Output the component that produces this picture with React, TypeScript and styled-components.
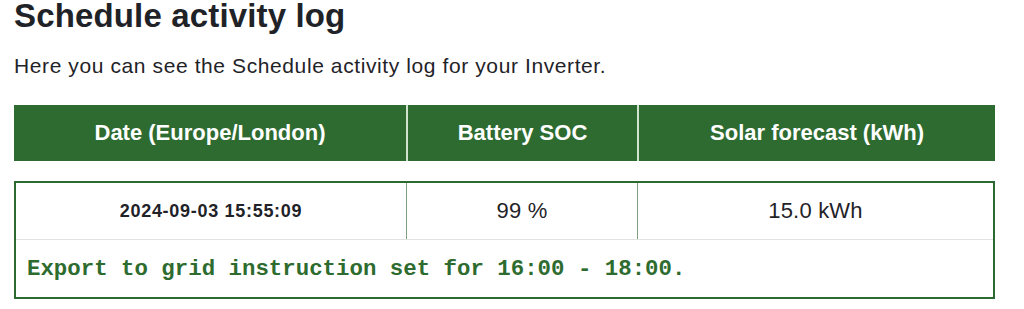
import React from "react";
import styled, { createGlobalStyle } from "styled-components";

const GlobalStyle = createGlobalStyle`
  html, body { margin: 0; padding: 0; background: #ffffff; }
  body { font-family: "Liberation Sans", Arial, sans-serif; color: #212529; }
  *, *::before, *::after { box-sizing: border-box; }
`;

const Page = styled.main`
  padding: 0 29px 0 14px;
`;

const Title = styled.h1`
  margin: 0;
  font-size: 33px;
  line-height: 32px;
  font-weight: 700;
  letter-spacing: 0.15px;
  color: #1f2328;
`;

const Lead = styled.p`
  margin: 21px 0 0;
  font-size: 21px;
  line-height: 26px;
  letter-spacing: 0.6px;
  color: #1f2328;
`;

const HeaderRow = styled.div`
  margin-top: 26px;
  display: grid;
  grid-template-columns: 392px 231px 1fr;
  height: 56px;
  background: #2e6b31;
`;

const HeaderCell = styled.div<{ $divider?: boolean }>`
  display: flex;
  align-items: center;
  justify-content: center;
  color: #ffffff;
  font-weight: 700;
  font-size: 22px;
  border-left: ${(p) => (p.$divider ? "2px solid #cfe3cf" : "none")};
`;

const Entry = styled.section`
  margin-top: 20px;
  border: 2px solid #2c6a2f;
`;

const ValueRow = styled.div`
  display: grid;
  grid-template-columns: 390px 231px 1fr;
  height: 57px;
  border-bottom: 1px solid #e2e2e2;
`;

const ValueCell = styled.div<{ $bold?: boolean; $divider?: boolean }>`
  display: flex;
  align-items: center;
  justify-content: center;
  font-size: ${(p) => (p.$bold ? "18px" : "22px")};
  font-weight: ${(p) => (p.$bold ? 700 : 400)};
  letter-spacing: ${(p) => (p.$bold ? "0.7px" : "0.2px")};
  color: #1f2328;
  border-left: ${(p) => (p.$divider ? "1px solid #7d9f7d" : "none")};
`;

const Message = styled.div`
  height: 57px;
  display: flex;
  align-items: center;
  padding-left: 11px;
  font-family: "Liberation Mono", "Courier New", monospace;
  font-weight: 700;
  font-size: 22.4px;
  color: #2e6b2f;
`;

export default function App() {
  return (
    <>
      <GlobalStyle />
      <Page>
        <Title>Schedule activity log</Title>
        <Lead>Here you can see the Schedule activity log for your Inverter.</Lead>
        <HeaderRow>
          <HeaderCell>Date (Europe/London)</HeaderCell>
          <HeaderCell $divider>Battery SOC</HeaderCell>
          <HeaderCell $divider>Solar forecast (kWh)</HeaderCell>
        </HeaderRow>
        <Entry>
          <ValueRow>
            <ValueCell $bold>2024-09-03 15:55:09</ValueCell>
            <ValueCell $divider>99 %</ValueCell>
            <ValueCell $divider>15.0 kWh</ValueCell>
          </ValueRow>
          <Message>Export to grid instruction set for 16:00 - 18:00.</Message>
        </Entry>
      </Page>
    </>
  );
}
